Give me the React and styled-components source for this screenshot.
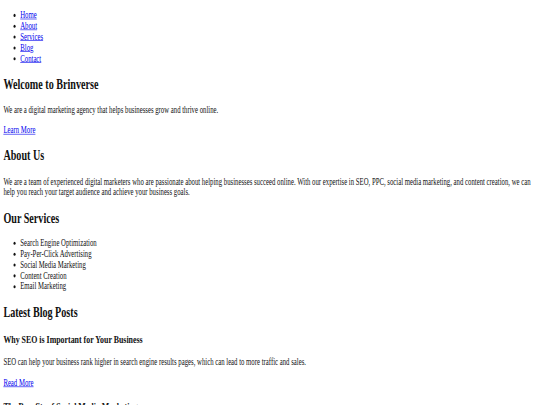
import React from "react";
import styled, { createGlobalStyle } from "styled-components";

const Global = createGlobalStyle`
  html, body { margin: 0; padding: 0; overflow: hidden; background: #fff; }
`;

const Viewport = styled.div`
  width: 1280px;
  transform: scale(0.421875, 0.603);
  transform-origin: 0 0;
`;

const Page = styled.div`
  padding: 0 8px;
  font-family: "Liberation Serif", "Times New Roman", serif;
  font-size: 16px;
  color: #111;
  display: flow-root;
  a { color: #0000ee; }
`;

const List = styled.ul`
  margin: 16px 0;
  padding-left: 40px;
`;

const H2 = styled.h2`
  font-size: 24px;
  margin: 0.83em 0;
`;

const H3 = styled.h3`
  font-size: 18.72px;
  margin: 1em 0;
`;

const P = styled.p`
  margin: 16px 0;
`;

const posts = [
  {
    title: "Why SEO is Important for Your Business",
    text: "SEO can help your business rank higher in search engine results pages, which can lead to more traffic and sales.",
  },
  {
    title: "The Benefits of Social Media Marketing",
    text: "Social media marketing can help you connect with your target audience and build brand awareness.",
  },
];

export default function App() {
  return (
    <>
      <Global />
      <Viewport>
        <Page>
          <header>
            <nav>
              <List>
                {["Home", "About", "Services", "Blog", "Contact"].map((n) => (
                  <li key={n}>
                    <a href="#">{n}</a>
                  </li>
                ))}
              </List>
            </nav>
          </header>
          <section>
            <H2>Welcome to Brinverse</H2>
            <P>We are a digital marketing agency that helps businesses grow and thrive online.</P>
            <P>
              <a href="#">Learn More</a>
            </P>
          </section>
          <section>
            <H2>About Us</H2>
            <P>
              We are a team of experienced digital marketers who are passionate about helping businesses succeed
              online. With our expertise in SEO, PPC, social media marketing, and content creation, we can help you
              reach your target audience and achieve your business goals.
            </P>
          </section>
          <section>
            <H2>Our Services</H2>
            <List>
              {[
                "Search Engine Optimization",
                "Pay-Per-Click Advertising",
                "Social Media Marketing",
                "Content Creation",
                "Email Marketing",
              ].map((s) => (
                <li key={s}>{s}</li>
              ))}
            </List>
          </section>
          <section>
            <H2>Latest Blog Posts</H2>
            {posts.map((p) => (
              <article key={p.title}>
                <H3>{p.title}</H3>
                <P>{p.text}</P>
                <P>
                  <a href="#">Read More</a>
                </P>
              </article>
            ))}
          </section>
        </Page>
      </Viewport>
    </>
  );
}
